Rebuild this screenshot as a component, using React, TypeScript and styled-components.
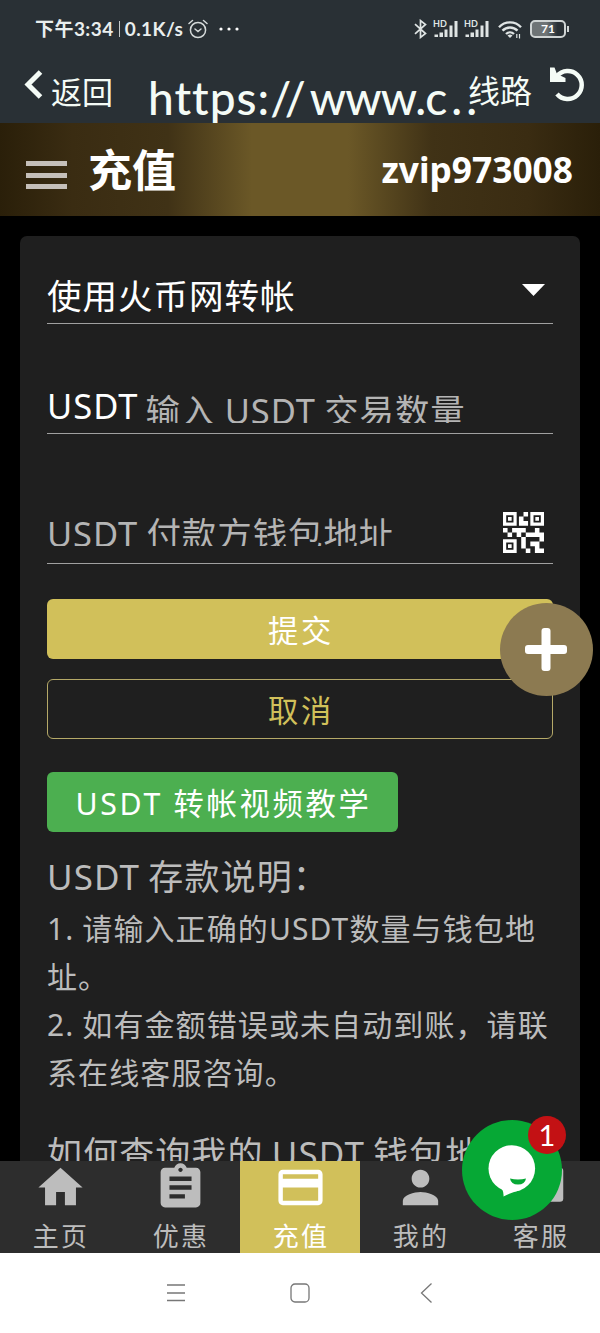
import React from "react";
import styled, { createGlobalStyle } from "styled-components";

const Global = createGlobalStyle`
  * { box-sizing: border-box; }
  body {
    margin: 0;
    background: #000;
    font-family: "Noto Sans", "Noto Sans CJK SC", sans-serif;
    color: #fff;
  }
  svg { display: block; flex: none; }
`;

const Screen = styled.div`
  position: relative;
  width: 600px;
  height: 1333px;
  overflow: hidden;
  display: flex;
  flex-direction: column;
`;

const StatusBar = styled.div`
  height: 58px;
  flex: none;
  background: #293035;
  display: flex;
  align-items: center;
  justify-content: space-between;
  padding: 0 30px 0 35px;
`;

const StatusGroup = styled.div<{ $gap: number }>`
  display: flex;
  align-items: center;
  gap: ${(p) => p.$gap}px;
`;

const StatusText = styled.span`
  font: 700 19px/26px Lato, "Noto Sans CJK SC", sans-serif;
  letter-spacing: 0.45px;
  color: #e9eeee;
  white-space: nowrap;
`;

const Divider = styled.i`
  width: 1px;
  height: 16px;
  background: #c5caca;
`;

const BrowserBar = styled.div`
  height: 65px;
  flex: none;
  background: #293035;
  display: flex;
  align-items: flex-start;
  padding-left: 24px;
  color: #f4fbf6;
`;

const BackLabel = styled.span`
  margin: 13px 0 0 8px;
  width: 97px;
  font: 400 31px/40px "Noto Sans CJK SC", sans-serif;
`;

const Url = styled.span`
  width: 320px;
  height: 55px;
  margin-top: 10px;
  font: 500 46px/60px Lato, sans-serif;
  letter-spacing: 1px;
  white-space: nowrap;
`;

const Spaced = styled.span<{ $ls: number }>`
  letter-spacing: ${(p) => p.$ls}px;
`;

const LineLabel = styled.span`
  width: 64px;
  margin-top: 10px;
  font: 400 32px/42px "Noto Sans CJK SC", sans-serif;
`;

const Header = styled.header`
  height: 93px;
  flex: none;
  display: flex;
  align-items: center;
  padding: 0 27px 0 26px;
  background: linear-gradient(
    90deg,
    #2a1f09 0%,
    #3a2c12 12%,
    #403216 28%,
    #6b5827 42%,
    #6b5827 58%,
    #403216 72%,
    #3a2c12 88%,
    #2a1f09 100%
  );
`;

const Burger = styled.div`
  width: 41px;
  height: 28px;
  margin-top: 11px;
  display: flex;
  flex-direction: column;
  justify-content: space-between;
  i { height: 5px; background: #c5bfb9; }
`;

const Title = styled.h1`
  margin: 0 auto 4px 21px;
  font: 700 44px/60px "Noto Sans CJK SC", sans-serif;
`;

const User = styled.span`
  margin-bottom: 2px;
  font-weight: 700;
  font-size: 35.3px;
  line-height: 46px;
`;

const Main = styled.main`
  height: 945px;
  flex: none;
  overflow: hidden;
  padding: 20px 20px 0;
  background: #000;
`;

const Card = styled.section`
  height: 1000px;
  border-radius: 7px;
  background: #1f1f1f;
  padding: 0 27px;
  color: #bcbcbc;
`;

const Field = styled.div<{ $height: number }>`
  height: ${(p) => p.$height}px;
  border-bottom: 1px solid #a0a0a0;
  display: flex;
  align-items: flex-end;
  white-space: nowrap;
`;

const FieldText = styled.span<{ $bottom: number }>`
  height: 50px;
  margin-bottom: ${(p) => p.$bottom}px;
  font-size: 34.5px;
  line-height: 50px;
  letter-spacing: 1px;
  color: #fff;
`;

const Placeholder = styled.span<{ $bottom: number; $left?: number }>`
  height: 38px;
  margin-bottom: ${(p) => p.$bottom}px;
  margin-left: ${(p) => p.$left ?? 0}px;
  overflow: hidden;
  font-size: 34.5px;
  line-height: 52px;
  letter-spacing: 0.9px;
  word-spacing: -1.5px;
  color: #b4b4b4;
`;

const FieldIcon = styled.span<{ $right: number; $bottom: number }>`
  margin: 0 ${(p) => p.$right}px ${(p) => p.$bottom}px auto;
`;

const Button = styled.button<{ $kind: "solid" | "outline" | "green"; $top: number }>`
  display: block;
  width: ${(p) => (p.$kind === "green" ? "351px" : "100%")};
  height: 60px;
  margin-top: ${(p) => p.$top}px;
  padding: 3px 0 0 2px;
  border: ${(p) => (p.$kind === "outline" ? "1px solid #b5a968" : "0")};
  border-radius: 6px;
  background: ${(p) => ({ solid: "#d1c05a", outline: "transparent", green: "#4caf50" })[p.$kind]};
  color: ${(p) => (p.$kind === "outline" ? "#d1c05a" : "#fff")};
  font: 400 30.3px/56px "Noto Sans", "Noto Sans CJK SC", sans-serif;
  letter-spacing: 2.7px;
  white-space: nowrap;
`;

const Heading = styled.h2<{ $top: number }>`
  margin: ${(p) => p.$top}px 0 0;
  font-weight: 400;
  font-size: 35px;
  line-height: 50px;
  letter-spacing: 1.1px;
  word-spacing: -2px;
  white-space: nowrap;
`;

const Lines = styled.div`
  margin-top: 3px;
`;

const Line = styled.p`
  margin: 0;
  font-size: 30px;
  line-height: 48px;
  letter-spacing: 1.1px;
  word-spacing: -1px;
  white-space: nowrap;
`;

const Tabs = styled.nav`
  height: 92px;
  flex: none;
  display: grid;
  grid-template-columns: repeat(5, 120px);
  background: #2d2d2d;
`;

const Tab = styled.div<{ $active?: boolean }>`
  display: flex;
  flex-direction: column;
  align-items: center;
  background: ${(p) => (p.$active ? "#d1c05a" : "#2d2d2d")};
  color: ${(p) => (p.$active ? "#fff" : "#bdbdbd")};
`;

const TabLabel = styled.span`
  margin-top: 2px;
  font: 400 26px/38px "Noto Sans CJK SC", sans-serif;
  letter-spacing: 2.2px;
  padding-left: 2px;
`;

const SystemNav = styled.div`
  height: 80px;
  flex: none;
  background: #fff;
  display: flex;
  justify-content: center;
  align-items: center;
  gap: 104px;
`;

const Fab = styled.div`
  position: absolute;
  left: 500px;
  top: 603px;
  width: 93px;
  height: 93px;
  border-radius: 50%;
  background: #8c7a51;
  display: grid;
  place-items: center;
`;

const Chat = styled.div`
  position: absolute;
  left: 462px;
  top: 1120px;
  width: 100px;
  height: 100px;
  border-radius: 50%;
  background: #06a835;
`;

const Badge = styled.span`
  position: absolute;
  left: 66px;
  top: -4px;
  width: 38px;
  height: 38px;
  border-radius: 50%;
  background: #c31114;
  font: 400 29px/37px Lato, sans-serif;
  text-align: center;
`;

const AlarmIcon = () => (
  <svg width="20" height="20" viewBox="0 0 20 20" fill="none" stroke="#d5dada" strokeWidth="1.5" strokeLinecap="round">
    <circle cx="10" cy="11" r="7.6" />
    <path d="M7 10l3 2.5 3-2.5M1 4.5 4.5 1.5M19 4.5 15.5 1.5" />
  </svg>
);

const BluetoothIcon = () => (
  <svg width="13" height="20" viewBox="0 0 13 20" fill="none" stroke="#dfe4e4" strokeWidth="1.7">
    <path d="M1 5.2 11.500 14.5 6.500 18.4V1.6L11.500 5.5 1 14.8" />
  </svg>
);

const HdLabel = styled.span`
  position: absolute;
  left: -1px;
  top: -1px;
  font: 700 9px/9px Lato, sans-serif;
  color: #dfe4e4;
`;

const SignalBox = styled.div`
  position: relative;
  width: 24px;
  height: 18px;
`;

const Signal = () => (
  <SignalBox>
    <HdLabel>HD</HdLabel>
    <svg width="24" height="18" fill="#dfe4e4">
      <path d="M.500 14.500h3.500V17H.500zM5.500 12.500H9V17H5.500zM10.500 9.500h3V17h-3zM15.500 5.500h3V17h-3zM20.500 1h3v16h-3z" />
    </svg>
  </SignalBox>
);

const WifiIcon = styled.svg`
  margin-left: 2px;
`;

const Wifi = () => (
  <WifiIcon width="24" height="19" viewBox="0 0 24 19" fill="none" stroke="#dfe4e4" strokeWidth="2.4">
    <path d="M1 7.2a15 15 0 0 1 22 0M4.5 10.700a10.5 10.5 0 0 1 15 0M8 14a5.8 5.8 0 0 1 8 0" />
    <path d="M9.5 15.5 12 18l2.5-2.5a4 4 0 0 0-5 0z" fill="#dfe4e4" stroke="none" />
    <path d="M18.800 14v4M21.500 14v4.500" strokeWidth="1.2" />
  </WifiIcon>
);

const BatteryBox = styled.div`
  position: relative;
  width: 36px;
  height: 18px;
  margin: 0 4px 0 1px;
  border: 2px solid #cfd4d4;
  border-radius: 5px;
  background: linear-gradient(90deg, #6e7476 45%, #293035 80%);
  color: #fff;
  font: 700 12px/14px Lato, sans-serif;
  text-align: center;
  &::after {
    content: "";
    position: absolute;
    right: -5px;
    top: 4px;
    width: 2px;
    height: 6px;
    background: #cfd4d4;
  }
`;

const BackIcon = styled.svg`
  margin-top: 12px;
`;
const ReloadIcon = styled.svg`
  margin-top: 8px;
  margin-left: 17px;
`;

const QrIcon = () => (
  <svg width="41" height="41" viewBox="0 0 9 9" fill="#fff" fillRule="evenodd">
    <path d="M0 0h3v3H0zM.7.7v1.6h1.6V.7zM1.1 1.1h.8v.8h-.8zM6 0h3v3H6zM6.7.7v1.6h1.6V.7zM7.1 1.1h.8v.8h-.8zM0 6h3v3H0zM.7 6.7v1.6h1.6V6.7zM1.1 7.1h.8v.8h-.8z" />
    <path d="M4.5 0h1v1h-1zM3.5 1h1v1h1v1h-2zM0 3.5h1v1H0zM1 4.5h1v1H1zM2 3.5h3v1H4v1H3v-1H2zM7 3.5h1v1h1v2H8v-1H5v-1h2zM4 5.5h1V8H4zM6 6.5h2V8h1v1H7V7.5H6zM5 8h1v1H5z" />
  </svg>
);

const HomeIcon = () => (
  <svg width="53" height="53" viewBox="0 0 24 24" fill="currentColor">
    <path d="M10 20v-6h4v6h5v-8h3L12 3 2 12h3v8z" />
  </svg>
);
const ClipboardIcon = () => (
  <svg width="53" height="53" viewBox="0 0 24 24" fill="currentColor">
    <path d="M19 3h-4.18C14.4 1.84 13.3 1 12 1s-2.400.84-2.820 2H5c-1.100 0-2 .9-2 2v14c0 1.100.9 2 2 2h14c1.100 0 2-.9 2-2V5c0-1.100-.9-2-2-2zm-7 0c.55 0 1 .45 1 1s-.45 1-1 1-1-.45-1-1 .45-1 1-1zm2 14H7v-2h7v2zm3-4H7v-2h10v2zm0-4H7V7h10v2z" />
  </svg>
);
const CardIcon = () => (
  <svg width="53" height="53" viewBox="0 0 24 24" fill="currentColor">
    <path d="M20 4H4c-1.110 0-1.990.89-1.990 2L2 18c0 1.110.89 2 2 2h16c1.110 0 2-.89 2-2V6c0-1.110-.89-2-2-2zm0 14H4v-6h16v6zm0-10H4V6h16v2z" />
  </svg>
);
const PersonIcon = () => (
  <svg width="53" height="53" viewBox="0 0 24 24" fill="currentColor">
    <path d="M12 12c2.210 0 4-1.790 4-4s-1.790-4-4-4-4 1.790-4 4 1.790 4 4 4zm0 2c-2.670 0-8 1.340-8 4v2h16v-2c0-2.660-5.330-4-8-4z" />
  </svg>
);
const MessageIcon = () => (
  <svg width="53" height="53" viewBox="0 0 24 24" fill="currentColor">
    <rect x="2" y="3" width="20.300" height="15.500" rx="1.500" />
  </svg>
);

const tabs = [
  { label: "主页", Icon: HomeIcon },
  { label: "优惠", Icon: ClipboardIcon },
  { label: "充值", Icon: CardIcon, active: true },
  { label: "我的", Icon: PersonIcon },
  { label: "客服", Icon: MessageIcon },
];

export default function App() {
  return (
    <Screen>
      <Global />
      <StatusBar>
        <StatusGroup $gap={5}>
          <StatusText>下午3:34</StatusText>
          <Divider />
          <StatusText>0.1K/s</StatusText>
          <AlarmIcon />
          <svg width="32" height="4" fill="#fff">
            <circle cx="8" cy="2" r="1.6" />
            <circle cx="16" cy="2" r="1.6" />
            <circle cx="24" cy="2" r="1.6" />
          </svg>
        </StatusGroup>
        <StatusGroup $gap={7}>
          <BluetoothIcon />
          <Signal />
          <Signal />
          <Wifi />
          <BatteryBox>71</BatteryBox>
        </StatusGroup>
      </StatusBar>

      <BrowserBar>
        <BackIcon width="19" height="29" fill="none" stroke="#f4fbf6" strokeWidth="5">
          <path d="M16.500 2 4 14.500 16.500 27" />
        </BackIcon>
        <BackLabel>返回</BackLabel>
        <Url>
          https:<Spaced $ls={4}>//</Spaced><Spaced $ls={-0.8}>www.</Spaced><Spaced $ls={4}>c..</Spaced>
        </Url>
        <LineLabel>线路</LineLabel>
        <ReloadIcon width="36" height="36" fill="none" stroke="#f4fbf6" strokeWidth="4.500">
          <path d="M8 10A14 14 0 1 1 8 28" />
          <path d="M1 1.500h4.500L8 8l8.500 4v4H1z" fill="#f4fbf6" stroke="none" />
        </ReloadIcon>
      </BrowserBar>

      <Header>
        <Burger><i /><i /><i /></Burger>
        <Title>充值</Title>
        <User>zvip973008</User>
      </Header>

      <Main>
        <Card>
          <Field $height={88}>
            <FieldText $bottom={2}>使用火币网转帐</FieldText>
            <FieldIcon $right={8} $bottom={27}>
              <svg width="23" height="12" fill="#fff"><path d="M0 0h23L11.500 12z" /></svg>
            </FieldIcon>
          </Field>
          <Field $height={110}>
            <FieldText $bottom={2}>USDT</FieldText>
            <Placeholder $bottom={10} $left={7}>输入 USDT 交易数量</Placeholder>
          </Field>
          <Field $height={130}>
            <Placeholder $bottom={17}>USDT 付款方钱包地址</Placeholder>
            <FieldIcon $right={9} $bottom={10}><QrIcon /></FieldIcon>
          </Field>
          <Button $kind="solid" $top={35}>提交</Button>
          <Button $kind="outline" $top={20}>取消</Button>
          <Button $kind="green" $top={33}>USDT 转帐视频教学</Button>
          <Heading $top={20}>USDT 存款说明：</Heading>
          <Lines>
            <Line>1. 请输入正确的USDT数量与钱包地</Line>
            <Line>址。</Line>
            <Line>2. 如有金额错误或未自动到账，请联</Line>
            <Line>系在线客服咨询。</Line>
          </Lines>
          <Heading $top={32}>如何查询我的 USDT 钱包地址</Heading>
        </Card>
      </Main>

      <Tabs>
        {tabs.map(({ label, Icon, active }) => (
          <Tab key={label} $active={active}>
            <Icon />
            <TabLabel>{label}</TabLabel>
          </Tab>
        ))}
      </Tabs>

      <SystemNav>
        <svg width="20" height="20" stroke="#777" strokeWidth="1.300">
          <path d="M1 2h18M1 10h18M1 17.500h18" />
        </svg>
        <svg width="20" height="20" fill="none" stroke="#777" strokeWidth="1.300">
          <rect x="1" y="1" width="18" height="18" rx="4" />
        </svg>
        <svg width="20" height="20" fill="none" stroke="#777" strokeWidth="1.300">
          <path d="M17.500 .500 7.500 10l10 9.500" />
        </svg>
      </SystemNav>

      <Fab>
        <svg width="45" height="43" fill="#fff">
          <rect x="17.500" y="0" width="9" height="43" rx="3" />
          <rect x="1" y="17" width="42" height="9" rx="3" />
        </svg>
      </Fab>

      <Chat>
        <svg width="100" height="100">
          <circle cx="49.800" cy="48.500" r="23.300" fill="#fff" />
          <path d="M37 67q5 2 4.500 9.500 7-4 17.500-6.500z" fill="#fff" />
          <path d="M48 58.500q8 2 16 0-1 6-8 6-7 0-8-6z" fill="#06a835" />
        </svg>
        <Badge>1</Badge>
      </Chat>
    </Screen>
  );
}
